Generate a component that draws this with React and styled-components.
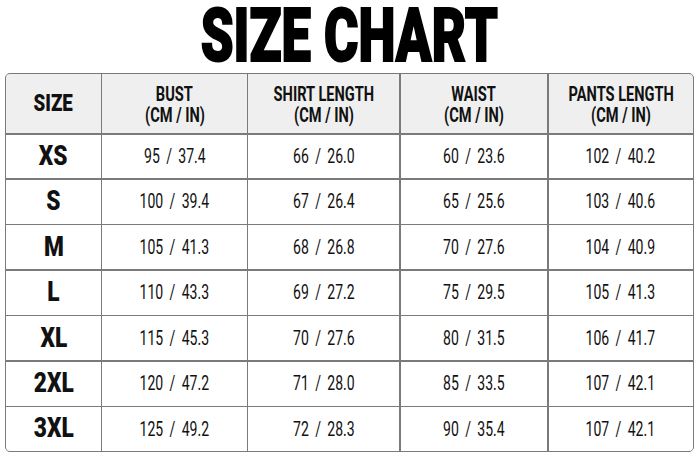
import React from "react";
import styled, { createGlobalStyle } from "styled-components";

const GlobalStyle = createGlobalStyle`
  html, body {
    margin: 0;
    padding: 0;
    background: #ffffff;
  }
  body {
    font-family: "Roboto", "Liberation Sans", sans-serif;
    color: #111;
  }
`;

const columns = [
  { title: "BUST", sub: "(CM / IN)" },
  { title: "SHIRT LENGTH", sub: "(CM / IN)" },
  { title: "WAIST", sub: "(CM / IN)" },
  { title: "PANTS LENGTH", sub: "(CM / IN)" },
];

const rows = [
  ["XS", "95 / 37.4", "66 / 26.0", "60 / 23.6", "102 / 40.2"],
  ["S", "100 / 39.4", "67 / 26.4", "65 / 25.6", "103 / 40.6"],
  ["M", "105 / 41.3", "68 / 26.8", "70 / 27.6", "104 / 40.9"],
  ["L", "110 / 43.3", "69 / 27.2", "75 / 29.5", "105 / 41.3"],
  ["XL", "115 / 45.3", "70 / 27.6", "80 / 31.5", "106 / 41.7"],
  ["2XL", "120 / 47.2", "71 / 28.0", "85 / 33.5", "107 / 42.1"],
  ["3XL", "125 / 49.2", "72 / 28.3", "90 / 35.4", "107 / 42.1"],
];

export default function App() {
  return (
    <Page>
      <GlobalStyle />
      <TitleBar>
        <Title>SIZE CHART</Title>
      </TitleBar>
      <Chart>
        <HeadCell>
          <Squeeze $size={24} $weight={900} $sx={0.78}>SIZE</Squeeze>
        </HeadCell>
        {columns.map((c) => (
          <HeadCell key={c.title}>
            <HeadStack>
              <Squeeze $size={20} $weight={700} $sx={0.73} $lh={18}>
                {c.title}
              </Squeeze>
              <Squeeze $size={20} $weight={700} $sx={0.73} $lh={18}>
                {c.sub}
              </Squeeze>
            </HeadStack>
          </HeadCell>
        ))}
        {rows.map((r) => (
          <React.Fragment key={r[0]}>
            <Cell>
              <Squeeze $size={27} $weight={900} $sx={0.84}>{r[0]}</Squeeze>
            </Cell>
            {r.slice(1).map((v, i) => (
              <Cell key={i}>
                <Squeeze $size={19.5} $weight={400} $sx={0.72} $words={4}>
                  {v}
                </Squeeze>
              </Cell>
            ))}
          </React.Fragment>
        ))}
      </Chart>
    </Page>
  );
}

const Page = styled.div`
  width: 700px;
  height: 467px;
  box-sizing: border-box;
  padding: 0 6px 0 5px;
  display: flex;
  flex-direction: column;
`;

const TitleBar = styled.div`
  height: 73px;
  display: flex;
  align-items: center;
  justify-content: center;
`;

const Title = styled.h1`
  margin: -8px 0 -6px;
  font-family: "Roboto", "Liberation Sans", sans-serif;
  font-weight: 900;
  font-size: 74px;
  line-height: normal;
  -webkit-text-stroke: 2px #000;
  color: #000;
  transform: scaleX(0.71);
`;

const Chart = styled.div`
  height: 379px;
  box-sizing: border-box;
  display: grid;
  grid-template-columns: 95.5fr 145.5fr 151.5fr 147.5fr 140fr;
  grid-template-rows: 59px repeat(7, 1fr);
  gap: 1.5px;
  background: #7a7a7a;
  border: 1.5px solid #7a7a7a;
  border-radius: 5px;
  overflow: hidden;
`;

const Cell = styled.div`
  background: #ffffff;
  display: flex;
  align-items: center;
  justify-content: center;
  text-align: center;
`;

const HeadCell = styled(Cell)`
  background: #efefef;
`;

const HeadStack = styled.div`
  display: flex;
  flex-direction: column;
  align-items: center;
  gap: 3px;
  margin-top: 1px;
`;

const Squeeze = styled.span`
  display: inline-block;
  white-space: nowrap;
  font-size: ${(p) => p.$size}px;
  font-weight: ${(p) => p.$weight};
  line-height: ${(p) => (p.$lh ? `${p.$lh}px` : 1.08)};
  word-spacing: ${(p) => p.$words || 0}px;
  transform: scaleX(${(p) => p.$sx});
  color: #111;
`;
